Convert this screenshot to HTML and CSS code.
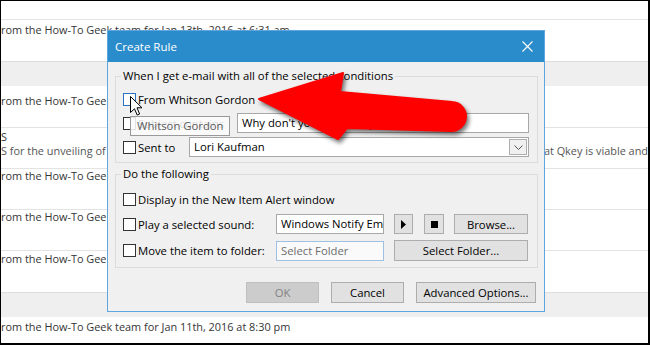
FILE: index.html
```html
<!DOCTYPE html>
<html>
<head>
<meta charset="utf-8">
<link rel="stylesheet" href="styles.css">
</head>
<body>
<div class="screen">
  <div class="list">
    <div class="row r0"></div>
    <div class="row r1"><div class="line">rom the How-To Geek team for Jan 13th, 2016 at 6:31 am</div></div>
    <div class="band"></div>
    <div class="row r2"><div class="line">rom the How-To Geek team for Jan 13th, 2016 at 6:30 am</div></div>
    <div class="row r3">
      <div class="line">S</div>
      <div class="line split"><span>S for the unveiling of the new product line</span><span>at Qkey is viable and</span></div>
    </div>
    <div class="row r4"><div class="line">rom the How-To Geek team for Jan 12th, 2016 at 6:30 am</div></div>
    <div class="row r5"><div class="line">rom the How-To Geek team for Jan 12th, 2016 at 8:30 am</div></div>
    <div class="row r6"><div class="line">rom the How-To Geek team for Jan 11th, 2016 at 9:30 pm</div></div>
    <div class="band"></div>
    <div class="row r7"><div class="line">rom the How-To Geek team for Jan 11th, 2016 at 8:30 pm</div></div>
  </div>

  <div class="dialog">
    <div class="titlebar">
      <span class="title">Create Rule</span>
      <svg class="close" width="11" height="11" viewBox="0 0 11 11"><path d="M0.5 0.5 L10.5 10.5 M10.5 0.5 L0.5 10.5" stroke="#fff" stroke-width="1.1" fill="none"/></svg>
    </div>
    <div class="body">
      <fieldset class="group g1">
        <legend>When I get e-mail with all of the selected conditions</legend>
        <div class="frow">
          <span class="cb hover"></span><span class="lbl">From Whitson Gordon</span>
        </div>
        <div class="frow">
          <span class="cb"></span><span class="lbl w-subj">Subject contains</span>
          <span class="input grow">Why don't you look at my...</span>
        </div>
        <div class="frow">
          <span class="cb"></span><span class="lbl w-sent">Sent to</span>
          <span class="input grow combo">Lori Kaufman<span class="drop"><svg width="9" height="5" viewBox="0 0 9 5"><path d="M0.5 0.5 L4.5 4.5 L8.5 0.5" stroke="#555" fill="none"/></svg></span></span>
        </div>
      </fieldset>
      <fieldset class="group g2">
        <legend>Do the following</legend>
        <div class="frow">
          <span class="cb"></span><span class="lbl">Display in the New Item Alert window</span>
        </div>
        <div class="frow fr2">
          <span class="cb"></span><span class="lbl w-act">Play a selected sound:</span>
          <span class="input small">Windows Notify Email</span>
          <span class="btn icon play"><svg width="5" height="9" viewBox="0 0 5 9"><path d="M0 0 L5 4.5 L0 9 Z" fill="#000"/></svg></span>
          <span class="btn icon stop"><span class="sq"></span></span>
          <span class="btn browse">Browse...</span>
        </div>
        <div class="frow fr3">
          <span class="cb"></span><span class="lbl w-act">Move the item to folder:</span>
          <span class="input small ro">Select Folder</span>
          <span class="btn selfolder">Select Folder...</span>
        </div>
      </fieldset>
      <div class="footer">
        <span class="btn ok disabled">OK</span>
        <span class="btn cancel">Cancel</span>
        <span class="btn adv">Advanced Options...</span>
      </div>
    </div>
  </div>

  <div class="tooltip">Whitson Gordon</div>

  <svg class="arrow" width="650" height="345" viewBox="0 0 650 345">
    <path d="M259 99 L343 73 L340 92 L452 102 A14.5 14.5 0 0 1 451 131 L347 128 L338 139 Z" fill="#ff0000" stroke="#ff0000" stroke-width="2" stroke-linejoin="round"/>
  </svg>

  <svg class="cursor" width="13" height="21" viewBox="0 0 13 21">
    <path d="M0.5 0.5 L0.5 16.5 L4.5 12.8 L7.2 19 L9.6 18 L7 11.8 L12 11.8 Z" fill="#fff" stroke="#000" stroke-width="1" stroke-linejoin="round"/>
  </svg>
</div>
</body>
</html>
```

FILE: styles.css
```css
* { box-sizing: border-box; }
html, body { margin: 0; padding: 0; background: #fff; }
body { font-family: "Open Sans", "Noto Sans", sans-serif; font-size: 11.3px; color: #333; }

.screen {
  position: relative;
  width: 650px;
  height: 345px;
  overflow: hidden;
  background: #fff;
  border-style: solid;
  border-color: #000;
  border-width: 1px 2px 2px 1px;
}

/* background mail list */
.list { display: flex; flex-direction: column; font-size: 10.9px; color: #353535; }
.row { border-bottom: 1px solid #e3e3e3; overflow: hidden; white-space: nowrap; }
.line { line-height: 15px; white-space: nowrap; }
.r0 { height: 19px; }
.r1 { height: 41px; padding-top: 2px; border-bottom: none; }
.band { height: 25px; background: #efefef; border-top: 1px solid #dddddd; }
.r2 { height: 42px; padding-top: 7px; }
.r3 { height: 41px; padding-top: 2px; }
.r3 .line { line-height: 14px; }
.r4 { height: 41px; padding-top: 0; }
.r4 .line { line-height: 13px; }
.r5 { height: 41px; padding-top: 0; }
.r5 .line { line-height: 14px; }
.r6 { height: 41px; padding-top: 1px; border-bottom: none; }
.r6 .line { line-height: 14px; }
.r7 { height: 40px; padding-top: 2px; border-bottom: none; }
.split { display: flex; justify-content: space-between; color: #555; }

/* dialog */
.dialog {
  position: absolute;
  left: 106px;
  top: 29px;
  width: 438px;
  height: 282px;
  border: 1px solid #60a6dc;
  background: #f0f0f0;
  display: flex;
  flex-direction: column;
  color: #000;
}
.titlebar {
  height: 31px;
  background: #2b8ccb;
  display: flex;
  align-items: center;
  justify-content: space-between;
  padding: 0 11px 0 7px;
  color: #fff;
}
.title { font-size: 11.5px; }
.close { display: block; }

.body { padding: 6px 6px 0 7px; display: flex; flex-direction: column; }

.group {
  margin: 0;
  border: 1px solid #dcdcdc;
  padding: 5px 8px 5px 7px;
  display: flex;
  flex-direction: column;
  gap: 4px;
  min-width: 0;
}
.group legend {
  padding: 0 2px;
  margin-left: -2px;
  line-height: 16px;
  color: #000;
}
.g2 { margin-top: 3px; padding-top: 7px; padding-bottom: 6px; gap: 5px; }
.g2 .fr3 { margin-top: 1px; height: 21px; }

.frow { display: flex; align-items: center; height: 20px; }
.cb {
  width: 13px; height: 13px;
  border: 1px solid #333;
  background: #fff;
  flex: none;
}
.cb.hover { border-color: #2d73c4; }
.lbl { margin-left: 2px; white-space: nowrap; flex: none; }
.w-subj { width: 99px; color: #000; }
.w-sent { width: 51px; }
.w-act { width: 138px; }

.input {
  height: 20px;
  border: 1px solid #a8a8a8;
  background: #fff;
  padding: 0 4px;
  line-height: 18px;
  white-space: nowrap;
  overflow: hidden;
}
.grow { flex: 1; }
.combo { position: relative; display: flex; justify-content: space-between; padding-right: 1px; }
.drop {
  width: 18px; height: 16px;
  margin-top: 1px;
  border: 1px solid #adadad;
  background: #f0f0f0;
  display: flex; align-items: center; justify-content: center;
}
.drop svg { display: block; }
.small { width: 108px; flex: none; }
.ro { border-color: #9fc0e3; background: #fafafa; color: #6d6d6d; }

.btn {
  height: 20px;
  border: 1px solid #adadad;
  background: #e1e1e1;
  display: flex;
  align-items: center;
  justify-content: center;
  white-space: nowrap;
  flex: none;
}
.fr3 .btn { height: 21px; }
.icon { width: 19px; }
.play { margin-left: 10px; }
.stop { margin-left: 11px; width: 20px; }
.stop .sq { width: 7px; height: 7px; background: #000; }
.browse { margin-left: 10px; width: 74px; }
.selfolder { margin-left: 10px; width: 134px; }

.footer {
  margin-top: 14px;
  padding-right: 2px;
  display: flex;
  justify-content: flex-end;
  gap: 12px;
}
.footer .btn { height: 21px; }
.ok, .cancel { width: 73px; }
.adv { width: 120px; }
.disabled { background: #cccccc; border-color: #bfbfbf; color: #838383; }

/* overlays */
.tooltip {
  position: absolute;
  left: 129px;
  top: 115px;
  width: 100px;
  height: 20px;
  border: 1px solid #9a9a9a;
  background: rgba(250, 250, 250, 0.88);
  color: #5a5a5a;
  padding-left: 6px;
  line-height: 18px;
}
.arrow {
  position: absolute;
  left: -1px;
  top: -1px;
  filter: drop-shadow(2px 3px 2px rgba(0, 0, 0, 0.55));
}
.cursor { position: absolute; left: 129px; top: 95px; }
```
